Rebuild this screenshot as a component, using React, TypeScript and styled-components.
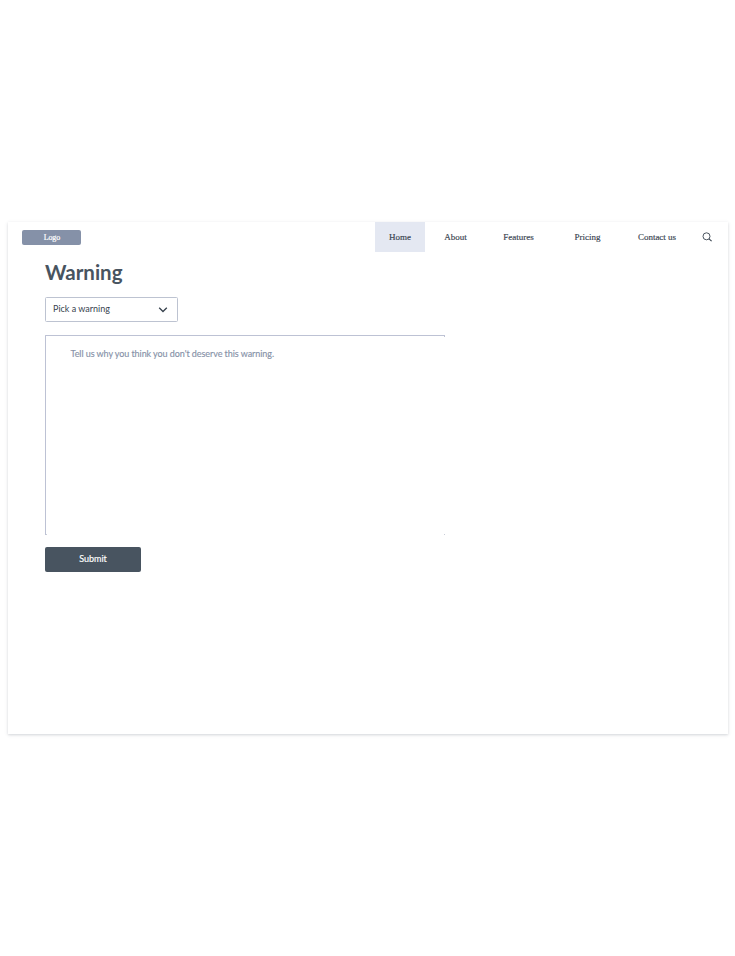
import React from "react";
import styled, { createGlobalStyle } from "styled-components";

const GlobalStyle = createGlobalStyle`
  * { box-sizing: border-box; }
  body { margin: 0; background: #fff; font-family: Lato, sans-serif; color: #485460; }
`;

const Page = styled.div`
  height: 956px;
  padding: 222px 7px 0 8px;
`;

const Card = styled.main`
  height: 512px;
  background: #fff;
  box-shadow: 0 1px 4px rgba(72, 84, 96, 0.12), 0 1px 2px rgba(72, 84, 96, 0.14);
`;

const Header = styled.header`
  display: flex;
  justify-content: space-between;
  height: 30px;
  padding-left: 14.4px;
`;

const Logo = styled.div`
  width: 59px;
  height: 15px;
  margin-top: 7.5px;
  border-radius: 2px;
  background: #8591a8;
  color: #fff;
  font: 8px/15px "Liberation Serif", serif;
  letter-spacing: -0.1px;
  -webkit-text-stroke: 0.2px #fff;
  text-align: center;
`;

const Nav = styled.nav`
  display: flex;
`;

const NavItem = styled.a<{ $width: number; $active?: boolean }>`
  width: ${({ $width }) => $width}px;
  background: ${({ $active }) => ($active ? "#e4e8f2" : "transparent")};
  color: #38434f;
  font: 9px/30px "Liberation Serif", serif;
  -webkit-text-stroke: 0.15px #38434f;
  text-align: center;
  white-space: nowrap;
`;

const SearchButton = styled.button`
  display: flex;
  align-items: center;
  width: 26px;
  margin-left: 12px;
  padding: 0;
  border: 0;
  background: none;
`;

const Form = styled.form`
  display: flex;
  flex-direction: column;
  align-items: flex-start;
  padding: 7px 0 0 37px;
`;

const Title = styled.h1`
  margin: 0;
  font-size: 20.5px;
  font-weight: 700;
  line-height: 26px;
`;

const Picker = styled.div`
  display: flex;
  align-items: center;
  justify-content: space-between;
  width: 133px;
  height: 25px;
  margin-top: 12px;
  padding: 0 9px 0 7px;
  border: 1px solid #bdc3d1;
  border-radius: 1.5px;
  color: #38434f;
  font-size: 9px;
`;

const PickerLabel = styled.span`
  padding-bottom: 2px;
  line-height: 11px;
`;

const Message = styled.div`
  width: 400px;
  height: 200px;
  margin-top: 13px;
  padding: 12px 0 0 24.5px;
  border: solid #bdc2d4;
  border-width: 1px 0 0 1px;
  border-radius: 1px 0 0 0;
  background:
    linear-gradient(#bdc2d4, #bdc2d4) top right / 1px 1px no-repeat,
    linear-gradient(#c9cdd8, #c9cdd8) bottom right / 1px 1px no-repeat,
    linear-gradient(#c9cdd8, #c9cdd8) bottom left / 1px 1px no-repeat;
  color: #8792a8;
  font-size: 9px;
  line-height: 12px;
  letter-spacing: -0.065px;
  -webkit-text-stroke: 0.15px #8792a8;
`;

const Submit = styled.button`
  width: 96px;
  height: 25px;
  margin-top: 12px;
  padding: 0 0 2px;
  border: 0;
  border-radius: 2px;
  background: #485460;
  color: #fff;
  font: 9px Lato, sans-serif;
  -webkit-text-stroke: 0.15px #fff;
`;

const links = [
  { label: "Home", width: 50 },
  { label: "About", width: 61 },
  { label: "Features", width: 65 },
  { label: "Pricing", width: 73 },
  { label: "Contact us", width: 66 },
];

export default function App() {
  return (
    <>
      <GlobalStyle />
      <Page>
        <Card>
          <Header>
            <Logo>Logo</Logo>
            <Nav>
              {links.map(({ label, width }, i) => (
                <NavItem key={label} $width={width} $active={i === 0}>
                  {label}
                </NavItem>
              ))}
              <SearchButton aria-label="Search">
                <svg width="11" height="10" viewBox="0 0 11 10" fill="none" stroke="#38434f">
                  <circle cx="4.5" cy="4.3" r="3.5" strokeWidth="0.9" />
                  <path d="M7 6.8 9.6 9.2" strokeWidth="1.1" />
                </svg>
              </SearchButton>
            </Nav>
          </Header>
          <Form>
            <Title>Warning</Title>
            <Picker>
              <PickerLabel>Pick a warning</PickerLabel>
              <svg width="10" height="7" viewBox="0 0 10 7" fill="none" stroke="#38434f" strokeWidth="1.3">
                <path d="M1.2 1.7 5 5.5 8.8 1.7" />
              </svg>
            </Picker>
            <Message>Tell us why you think you don't deserve this warning.</Message>
            <Submit type="button">Submit</Submit>
          </Form>
        </Card>
      </Page>
    </>
  );
}
